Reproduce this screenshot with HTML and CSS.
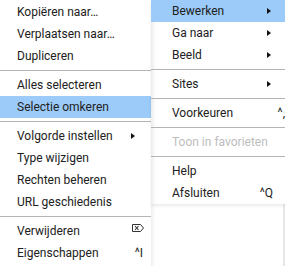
FILE: index.html
```html
<!DOCTYPE html>
<html lang="nl">
<head>
<meta charset="UTF-8">
<title>Menu</title>
<link rel="stylesheet" href="styles.css">
</head>
<body>

<div class="screen">
    <div class="menu sub">
        <div class="item">Kopiëren naar…</div>
        <div class="item">Verplaatsen naar…</div>
        <div class="item">Dupliceren</div>
        <div class="sep"></div>
        <div class="item">Alles selecteren</div>
        <div class="item active">Selectie omkeren</div>
        <div class="sep"></div>
        <div class="item">Volgorde instellen <span class="arrow"></span></div>
        <div class="item">Type wijzigen</div>
        <div class="item">Rechten beheren</div>
        <div class="item">URL geschiedenis</div>
        <div class="sep"></div>
        <div class="item">Verwijderen
            <svg class="del" width="12" height="8" viewBox="0 0 12 8">
                <path d="M0.5 0.5h8l3 3.5-3 3.5h-8z" fill="none" stroke="#333" stroke-width="1"/>
                <path d="M3 2l3.5 4M6.5 2l-3.5 4" stroke="#333" stroke-width="1.1"/>
            </svg>
        </div>
        <div class="item">Eigenschappen <span class="key">^I</span></div>
    </div>

    <div class="side">
        <div class="menu main">
            <div class="item active">Bewerken <span class="arrow"></span></div>
            <div class="item">Ga naar <span class="arrow"></span></div>
            <div class="item">Beeld <span class="arrow"></span></div>
            <div class="sep"></div>
            <div class="item">Sites <span class="arrow"></span></div>
            <div class="sep"></div>
            <div class="item">Voorkeuren <span class="key cut">^,</span></div>
            <div class="sep"></div>
            <div class="item disabled">Toon in favorieten</div>
            <div class="sep"></div>
            <div class="item">Help</div>
            <div class="item">Afsluiten <span class="key">^Q</span></div>
        </div>
        <div class="behind"></div>
    </div>
</div>

</body>
</html>
```

FILE: styles.css
```css
* {
    margin: 0;
    padding: 0;
    box-sizing: border-box;
}
body {
    background: #fff;
    font-family: Roboto, 'Liberation Sans', sans-serif;
    font-size: 12px;
    color: #212121;
}
.screen {
    display: flex;
    width: 285px;
    height: 266px;
    overflow: hidden;
}
.menu {
    background: #fff;
}
.sub {
    width: 151px;
    flex: none;
    padding-top: 1px;
}
.side {
    flex: 1;
    display: flex;
    flex-direction: column;
}
.main {
    box-shadow: inset 5px 0 5px -4px rgba(0, 0, 0, 0.12), 0 2px 3px rgba(0, 0, 0, 0.08);
    position: relative;
    z-index: 1;
}
.behind {
    flex: 1;
    border-right: 2px solid #e6e6e6;
    box-shadow: inset 5px 0 5px -4px rgba(0, 0, 0, 0.1);
}
.item {
    height: 22px;
    display: flex;
    align-items: center;
    justify-content: space-between;
    white-space: nowrap;
}
.sub .item {
    padding: 0 6px 0 17px;
}
.main .item {
    padding: 0 10px 0 21px;
}
.item.active {
    background: #9ccbf9;
}
.item.disabled {
    color: #bdbdbd;
}
.sep {
    height: 7px;
    padding-top: 3px;
}
.sep::before {
    content: "";
    display: block;
    height: 1px;
    background: #b4b4b4;
}
/* small black submenu triangle */
.arrow {
    width: 0;
    height: 0;
    border-top: 3px solid transparent;
    border-bottom: 3px solid transparent;
    border-left: 4px solid #111;
    margin-right: 4px;
}
.sub .arrow {
    margin-right: 10px;
}
.key {
    font-size: 12px;
    color: #222;
    margin-right: 2px;
}
.key.cut {
    margin-right: -10px;
}
.del {
    margin-right: 1px;
    margin-top: -6px;
}
```
